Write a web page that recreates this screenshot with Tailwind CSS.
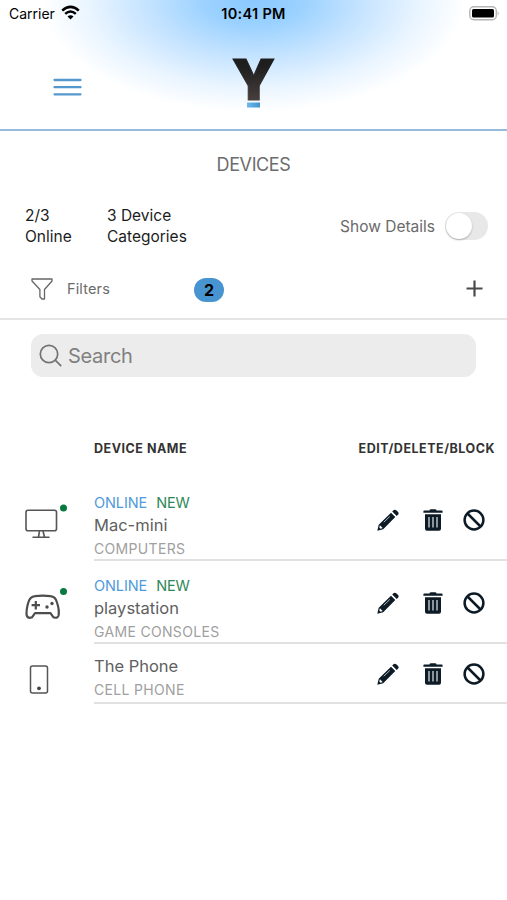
<!DOCTYPE html>
<html lang="en">
<head>
<meta charset="utf-8">
<title>Devices</title>
<script src="https://cdn.jsdelivr.net/npm/@tailwindcss/browser@4"></script>
</head>
<body class="bg-white">
<svg class="hidden">
  <symbol id="pencil" viewBox="0 0 22 22">
    <path fill="#0d1b26" d="M16.800 1q1.200-.8 2.400.2l1.900 1.900q1 1.200.1 2.500l-1.500 1.500-4.500-4.500zM14 3.800l4.300 4.300L6.200 20.200.3 21.700l1.400-5.900z"/>
    <path stroke="#d5dade" stroke-width=".8" fill="none" d="M6.800 13.200l6-5.700"/>
    <path fill="#fff" d="M2.900 16.300l2.700 2.700-2 .7-1.300-1.300z"/>
  </symbol>
  <symbol id="trash" viewBox="0 0 20 22">
    <path fill="#0d1b26" d="M6.500 1.500Q6.500.2 8 .2h4q1.500 0 1.500 1.300h5.300q.8 0 .8.900v1.400H.4V2.400q0-.9.800-.9zM2 5.200h16v14.600q0 2-2 2H4q-2 0-2-2z"/>
    <path stroke="#cfd6db" stroke-width="1.300" d="M6 8v10.500M10 8v10.500M14 8v10.500"/>
  </symbol>
  <symbol id="block" viewBox="0 0 22 22">
    <circle cx="11" cy="11" r="9.400" fill="none" stroke="#0d1b26" stroke-width="2.500"/>
    <path d="M4.500 4.500l13 13" stroke="#0d1b26" stroke-width="2.500"/>
  </symbol>
</svg>
<main class="w-[507px] h-[900px] overflow-hidden font-['Inter',sans-serif] text-[#606060]">
  <header class="h-[131px] border-b-[2.500px] border-[#95bbdd] bg-[radial-gradient(ellipse_212px_112px_at_254px_0px,#8ac8ff_0%,#9ad1ff_22%,#c4e3ff_50%,#e8f4ff_77%,#ffffff_100%)]">
    <div class="h-7 grid grid-cols-3 items-center px-[9px] text-black text-[14px] leading-7">
      <div class="flex items-center gap-[6px]"><span>Carrier</span>
        <svg class="w-[19px] h-[15px] mb-[3px]" viewBox="0 0 19 15" fill="none" stroke="#000" stroke-width="2.500"><path d="M1.200 5.600q8.300-7.500 16.600 0M4.200 8.900q5.300-4.700 10.600 0"/><path d="M9.500 14.500L6.500 11.500q3-2.600 6 0z" fill="#000" stroke="none"/></svg>
      </div>
      <div class="text-center font-semibold text-[14.500px] tracking-[0.300px]">10:41 PM</div>
      <svg class="justify-self-end w-[31px] h-[15px] mr-[-2px] mb-[1px]" viewBox="0 0 31 15"><rect x=".8" y=".8" width="26.500" height="13" rx="4" fill="#fff" stroke="#b5b5b5" stroke-width="1.400"/><rect x="3" y="3" width="22" height="8.600" rx="1.500"/><path d="M28.700 5q2 2.300 0 4.600z" fill="#aaa"/></svg>
    </div>
    <div class="grid grid-cols-3 px-[53px] pt-[9px]">
      <svg class="w-[29px] h-[18px] mt-[41px]" viewBox="0 0 29 18" stroke="#5598cd" stroke-width="2.300" stroke-linecap="round"><path d="M1.500 2h26M1.500 9.200h26M1.500 16.300h26"/></svg>
      <svg class="justify-self-center w-[60px] h-[90px]" viewBox="-8 -20 60 90">
        <defs><linearGradient id="ink" x2="0" y2="1"><stop offset=".3" stop-color="#1e1e1e"/><stop offset=".8" stop-color="#463f3d"/></linearGradient><linearGradient id="bar"><stop stop-color="#6dbbe9"/><stop offset="1" stop-color="#4392cc"/></linearGradient></defs>
        <text x="22.500" y="43" text-anchor="middle" textLength="43.500" lengthAdjust="spacingAndGlyphs" font-family="Inter" font-size="57" font-weight="900" fill="url(#ink)" stroke="url(#ink)" stroke-width="1">Y</text>
        <path d="M16 45.500h13v5H16z" fill="url(#bar)"/>
      </svg>
    </div>
  </header>
  <h1 class="h-[67px] pt-[20px] text-center text-[18px] leading-[28px] tracking-[-0.400px] text-[#6c6c6c]">DEVICES</h1>
  <section class="h-[58px] flex pl-[25px] pr-[19px] pt-[7px] text-[15.500px] leading-[21px] text-[#1c1c1c]">
    <div class="w-[82px]">2/3<br>Online</div>
    <div>3 Device<br>Categories</div>
    <div class="ml-auto h-[42px] flex items-center gap-[10px] text-[#6a6a6a]"><span>Show Details</span>
      <div class="w-[43px] h-[28px] rounded-full bg-[#e8e8e8] p-[1px]"><div class="size-[26px] rounded-full bg-white shadow-[0_1px_2px_#0004]"></div></div>
    </div>
  </section>
  <section class="h-[64px] flex items-center border-b-2 border-[#e5e5e5] pl-[31px] pr-[24px] pt-[3px]">
    <svg class="w-[22px] h-[22px]" viewBox="0 0 22 22" fill="none" stroke="#666" stroke-width="1.300" stroke-linejoin="round"><path d="M1 1h20v2l-7.500 8.500V21h-2.600l-2-2.200v-7.300L1 3z"/></svg>
    <span class="ml-[14px] w-[127px] text-[14.500px] text-[#6b6b6b] tracking-[0.150px]">Filters</span>
    <span class="w-[30px] h-[24px] mt-[3px] rounded-full bg-[#4894d1] text-center text-[16px] font-bold leading-[24px] text-black">2</span>
    <svg class="ml-auto size-[17px]" viewBox="0 0 17 17" stroke="#4a4a4a" stroke-width="2.200"><path d="M8.500 .5v16M.5 8.500h16"/></svg>
  </section>
  <section class="pt-[14px] pl-[31px] h-[99px]">
    <div class="w-[445px] h-[43px] rounded-[12px] bg-[#ececec] flex items-center pl-[8px] gap-[5px] text-[20px] tracking-[-0.300px] text-[#808080]">
      <svg class="size-[24px]" viewBox="0 0 24 24" fill="none" stroke="#737373" stroke-width="1.700"><circle cx="10" cy="10" r="8.700"/><path d="M16.200 16.200l6 6"/></svg>
      <span>Search</span>
    </div>
  </section>
  <section>
    <div class="h-[60px] pl-[94px] pr-[12px] flex justify-between pt-[20px] text-[12.500px] leading-[20px] tracking-[0.520px] font-bold text-[#333]"><span>DEVICE NAME</span><span>EDIT/DELETE/BLOCK</span></div>
    <div class="flex h-[82px]">
      <div class="w-[94px] pt-[25px] pl-[24px]">
        <svg class="w-[44px] h-[35px]" viewBox="0 0 44 35" fill="none" stroke="#555" stroke-width="1.600"><rect x="2" y="6.300" width="30.500" height="20.500" rx="2"/><path d="M15.500 27l-1 6M19 27l1.500 6M8.500 33.300h17"/><circle cx="39.500" cy="4" r="3.500" fill="#087a40" stroke="none"/></svg>
      </div>
      <div class="grow border-b-2 border-[#e1e1e1] flex justify-between pr-[22px]">
        <div class="pt-[14px]"><div class="flex gap-[9px] text-[14.500px] tracking-[-0.100px] leading-[20px]"><span class="text-[#4f9ada]">ONLINE</span><span class="text-[#2e8757]">NEW</span></div><div class="text-[16.500px] leading-[24px]">Mac-mini</div><div class="text-[14px] leading-[24px] tracking-[0.320px] text-[#a0a0a0]">COMPUTERS</div></div>
        <div class="flex pt-[30px]"><svg class="size-[22px] mr-[24px]"><use href="#pencil"/></svg><svg class="w-[20px] h-[22px] mr-[20px]"><use href="#trash"/></svg><svg class="size-[22px]"><use href="#block"/></svg></div>
      </div>
    </div>
    <div class="flex h-[83px]">
      <div class="w-[94px] pt-[26px] pl-[24px]">
        <svg class="w-[44px] h-[35px]" viewBox="0 0 44 35" fill="none" stroke="#4d4d4d" stroke-width="2.200" stroke-linejoin="round"><path d="M4.300 15.500Q6 9.700 11 9.200Q18.800 8 26.500 9.200Q31.500 9.700 33 15.500Q35.500 23 34.600 28.500Q33.500 31.800 29.500 30.300L26.500 26.200H11L8 30.300Q4 31.800 2.700 28.500Q2 23 4.300 15.500z"/><path d="M11.800 14v8.400M7.600 18.200H16"/><circle cx="28" cy="16.500" r="1.700" fill="#4d4d4d" stroke="none"/><circle cx="23" cy="20" r="1.700" fill="#4d4d4d" stroke="none"/><circle cx="39.500" cy="4.500" r="3.500" fill="#087a40" stroke="none"/></svg>
      </div>
      <div class="grow border-b-2 border-[#e1e1e1] flex justify-between pr-[22px]">
        <div class="pt-[15px]"><div class="flex gap-[9px] text-[14.500px] tracking-[-0.100px] leading-[20px]"><span class="text-[#4f9ada]">ONLINE</span><span class="text-[#2e8757]">NEW</span></div><div class="text-[16.500px] leading-[24px]">playstation</div><div class="text-[14px] leading-[24px] tracking-[0.320px] text-[#a0a0a0]">GAME CONSOLES</div></div>
        <div class="flex pt-[31px]"><svg class="size-[22px] mr-[24px]"><use href="#pencil"/></svg><svg class="w-[20px] h-[22px] mr-[20px]"><use href="#trash"/></svg><svg class="size-[22px]"><use href="#block"/></svg></div>
      </div>
    </div>
    <div class="flex h-[60px]">
      <div class="w-[94px] pt-[21px] pl-[29px]">
        <svg class="w-[20px] h-[29px]" viewBox="0 0 20 29"><rect x="1.500" y="1" width="17" height="27" rx="2" fill="none" stroke="#555" stroke-width="1.500"/><circle cx="10" cy="23.300" r="1.900" fill="#444"/></svg>
      </div>
      <div class="grow border-b-2 border-[#e1e1e1] flex justify-between pr-[22px]">
        <div class="pt-[10px]"><div class="text-[16.500px] leading-[24px]">The Phone</div><div class="text-[14px] leading-[24px] tracking-[0.320px] text-[#a0a0a0]">CELL PHONE</div></div>
        <div class="flex pt-[19px]"><svg class="size-[22px] mr-[24px]"><use href="#pencil"/></svg><svg class="w-[20px] h-[22px] mr-[20px]"><use href="#trash"/></svg><svg class="size-[22px]"><use href="#block"/></svg></div>
      </div>
    </div>
  </section>
</main>
</body>
</html>
